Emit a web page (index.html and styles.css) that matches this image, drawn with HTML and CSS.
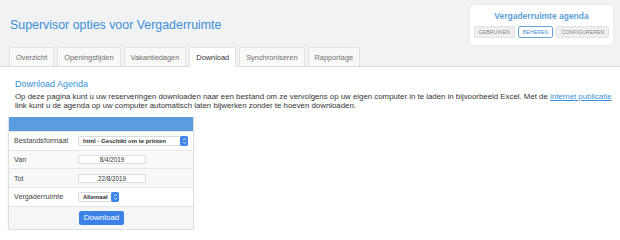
FILE: index.html
```html
<!DOCTYPE html>
<html lang="nl">
<head>
<meta charset="utf-8">
<title>Supervisor opties voor Vergaderruimte</title>
<link rel="stylesheet" href="styles.css">
</head>
<body>
<div class="top">
  <div class="head">
    <h1 class="title">Supervisor opties voor Vergaderruimte</h1>
    <div class="card">
      <div class="card-title">Vergaderruimte agenda</div>
      <div class="card-btns">
        <span class="cbtn">Gebruiken</span>
        <span class="cbtn active">Beheren</span>
        <span class="cbtn">Configureren</span>
      </div>
    </div>
  </div>
  <div class="tabs">
    <span class="tab">Overzicht</span>
    <span class="tab">Openingstijden</span>
    <span class="tab">Vakantiedagen</span>
    <span class="tab active">Download</span>
    <span class="tab">Synchroniseren</span>
    <span class="tab">Rapportage</span>
  </div>
</div>
<div class="content">
  <h2 class="sub">Download Agenda</h2>
  <p class="intro">Op deze pagina kunt u uw reserveringen downloaden naar een bestand om ze vervolgens op uw eigen computer in te laden in bijvoorbeeld Excel. Met de <a href="#">internet publicatie</a> link kunt u de agenda op uw computer automatisch laten bijwerken zonder te hoeven downloaden.</p>
  <div class="panel">
    <div class="panel-head"></div>
    <div class="row">
      <span class="label">Bestandsformaat</span>
      <span class="select wide">html - Geschikt om te printen<span class="arrow"><svg viewBox="0 0 6 9" width="5" height="8"><path d="M1.2 3.4 L3 1.5 L4.8 3.4 M1.2 5.6 L3 7.5 L4.8 5.6" fill="none" stroke="#fff" stroke-width="0.9"/></svg></span></span>
    </div>
    <div class="row grey">
      <span class="label">Van</span>
      <span class="date">8/4/2019</span>
    </div>
    <div class="row grey2">
      <span class="label">Tot</span>
      <span class="date">22/8/2019</span>
    </div>
    <div class="row">
      <span class="label">Vergaderruimte</span>
      <span class="select small">Allemaal<span class="arrow"><svg viewBox="0 0 6 9" width="5" height="8"><path d="M1.2 3.4 L3 1.5 L4.8 3.4 M1.2 5.6 L3 7.5 L4.8 5.6" fill="none" stroke="#fff" stroke-width="0.9"/></svg></span></span>
    </div>
    <div class="row foot">
      <span class="label"></span>
      <span class="btn">Download</span>
    </div>
  </div>
</div>
</body>
</html>
```

FILE: styles.css
```css
html, body {
  margin: 0;
  padding: 0;
  background: #fff;
  font-family: "Liberation Sans", Arial, Helvetica, sans-serif;
}
.top {
  background: #f1f2f4;
  border-bottom: 1px solid #dcdcdc;
}
.head {
  display: flex;
  justify-content: space-between;
  align-items: center;
  padding: 5px 7px 0 10px;
}
.title {
  margin: 0;
  font-size: 12.4px;
  font-weight: normal;
  color: #3b8fd6;
  line-height: 16px;
}
.card {
  width: 143px;
  height: 40px;
  box-sizing: border-box;
  background: #fff;
  border-radius: 4px;
  box-shadow: 0 0 2px rgba(0,0,0,0.08);
  display: flex;
  flex-direction: column;
  align-items: center;
  padding-top: 6px;
}
.card-title {
  font-size: 8.5px;
  font-weight: bold;
  color: #5ea1d8;
  line-height: 10px;
}
.card-btns {
  display: flex;
  gap: 3px;
  margin-top: 5px;
}
.cbtn {
  display: flex;
  align-items: center;
  justify-content: center;
  height: 12px;
  box-sizing: border-box;
  padding: 0 4px;
  background: #efefef;
  border: 1px solid #e2e2e2;
  border-radius: 2px;
  font-size: 5.3px;
  text-transform: uppercase;
  color: #8a8a8a;
}
.cbtn.active {
  background: #fff;
  border-color: #6aa6dc;
  color: #4a8fd3;
}
.tabs {
  display: flex;
  gap: 3px;
  padding-left: 9px;
  margin-top: 2px;
  margin-bottom: -1px;
}
.tab {
  height: 20px;
  box-sizing: border-box;
  display: flex;
  align-items: center;
  padding: 0 6px;
  background: #f8f8f8;
  border: 1px solid #e2e2e2;
  border-bottom-color: #dcdcdc;
  border-radius: 2px 2px 0 0;
  font-size: 7.4px;
  color: #6f6f6f;
}
.tab.active {
  background: #fff;
  border-bottom-color: #fff;
  color: #333;
}
.content {
  padding: 12px 0 0 0;
}
.sub {
  margin: 0 0 0 15px;
  font-size: 9px;
  font-weight: normal;
  color: #3b8fd6;
  line-height: 11px;
}
.intro {
  margin: 3px 6px 0 15px;
  font-size: 7.85px;
  line-height: 8.6px;
  color: #333;
}
.intro a {
  color: #3b8fd6;
}
.panel {
  width: 184px;
  margin: 7px 0 0 8px;
  border: 1px solid #e0e0e0;
  border-top: none;
  box-shadow: 0 1px 2px rgba(0,0,0,0.08);
}
.panel-head {
  height: 14px;
  background: #5b9be0;
}
.row {
  display: flex;
  align-items: center;
  height: 17.6px;
  border-top: 1px solid #e6e6e6;
  background: #fff;
}
.row.grey { background: #fafafa; }
.row.grey2 { background: #f8f8f8; }
.row.foot {
  height: 22px;
  background: #f5f6f8;
}
.label {
  width: 64px;
  padding-left: 5px;
  font-size: 7.2px;
  color: #444;
  flex: none;
}
.select {
  position: relative;
  display: flex;
  align-items: center;
  height: 10px;
  box-sizing: border-box;
  background: #fff;
  border: 1px solid #dadada;
  border-radius: 2px;
  padding-left: 4px;
  font-size: 6px;
  font-weight: bold;
  color: #333;
}
.select.wide { width: 110px; }
.select.small { width: 41px; }
.arrow {
  position: absolute;
  right: -1px;
  top: -1px;
  width: 8px;
  height: 10px;
  background: #3c84ea;
  border-radius: 2px;
  display: flex;
  align-items: center;
  justify-content: center;
}
.date {
  width: 68px;
  height: 9px;
  box-sizing: border-box;
  border: 1px solid #dedede;
  background: #fff;
  display: flex;
  align-items: center;
  justify-content: center;
  font-size: 6.3px;
  color: #333;
}
.btn {
  margin-left: 1px;
  width: 45px;
  height: 14px;
  background: #3a82e8;
  border-radius: 2px;
  color: #fff;
  font-size: 8px;
  display: flex;
  align-items: center;
  justify-content: center;
}
```
